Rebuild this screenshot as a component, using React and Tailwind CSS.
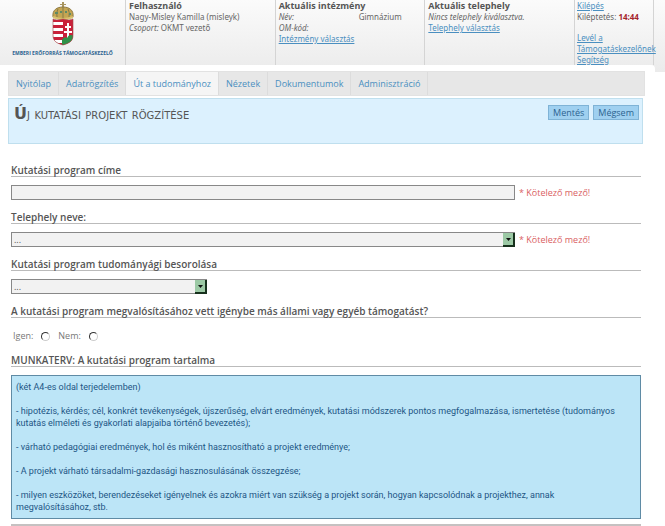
const tabs = ['Nyitólap', 'Adatrögzítés', 'Út a tudományhoz', 'Nézetek', 'Dokumentumok', 'Adminisztráció']
const activeTab = 'Út a tudományhoz'

const linkStyle = 'text-[#4a8fc0] underline'

function Crest() {
  return (
    <svg width="22" height="44" viewBox="0 0 22 44" aria-hidden="true">
      <defs>
        <clipPath id="shield">
          <path d="M1 17Q4 19 11 17Q18 19 21 17V33C21 39 18 41 11 43C4 41 1 39 1 33Z" />
        </clipPath>
      </defs>
      <path d="M10 0h2v2h2v1h-2v3h-2V3H8V2h2z" fill="#a89560" />
      <path d="M1 15C0 8 5 5 11 5S22 8 21 15Q11 19 1 15Z" fill="#c4a552" stroke="#8d7840" />
      <path d="M11 5v11M6 7q-2 3-1 8M16 7q2 3 1 8" stroke="#857a48" fill="none" />
      <path d="M3 11h3M8 10h2M13 10h2M17 12h2" stroke="#5f8a65" strokeWidth="2" />
      <path d="M1 15q10 4 20 0" stroke="#d9c36f" strokeWidth="2" fill="none" />
      <g clipPath="url(#shield)">
        <rect y="16" width="22" height="28" fill="#c9213a" />
        <path d="M0 20h11v3H0zM0 26h11v3H0zM0 32h11v3H0zM0 38h11v3H0z" fill="#fff" />
        <path d="M15 21h2v3h2v2h-2v3h3v2h-3v6h-2v-6h-3v-2h3v-3h-2v-2h2z" fill="#fff" />
        <path d="M10 44v-6q2-4 5-2q2-5 7-2v10z" fill="#2f9148" />
      </g>
      <path d="M1 17Q4 19 11 17Q18 19 21 17V33C21 39 18 41 11 43C4 41 1 39 1 33Z" fill="none" stroke="#a04a4a" strokeWidth="0.6" />
    </svg>
  )
}

function HeaderColumn({ title, children }) {
  return (
    <div className="border-l border-[#d4d4d4] pl-[3px]">
      <h2 className="font-['Open_Sans',sans-serif] text-[9px] leading-[11px] font-bold text-[#555]">{title}</h2>
      {children}
    </div>
  )
}

function FieldLabel({ htmlFor, children }) {
  return (
    <label htmlFor={htmlFor} className="block border-b border-[#bbb] text-[10px] leading-[12px] font-semibold text-[#555]">
      {children}
    </label>
  )
}

function Select({ id, className }) {
  return (
    <div className={`relative ${className}`}>
      <select
        id={id}
        className="block h-[15px] w-full appearance-none rounded-none border border-[#888] bg-[#f2f2f2] pl-[2px] text-[9px] leading-[13px] text-[#555] outline-none"
      >
        <option>...</option>
      </select>
      <span className="pointer-events-none absolute top-px right-0 flex h-[14px] w-[12px] items-center justify-center border-r-2 border-b-2 border-[#16301c] bg-[#9cc9a5]">
        <svg width="5" height="3" viewBox="0 0 5 3" aria-hidden="true">
          <path d="M0 0h5L2.500 3z" fill="#111" />
        </svg>
      </span>
    </div>
  )
}

function Required() {
  return <span className="text-[#d9605f]">* Kötelező mező!</span>
}

function Radio({ id, label }) {
  return (
    <>
      <label htmlFor={id}>{label}</label>
      <input
        id={id}
        type="radio"
        name="tamogatas"
        className="mx-[8px] size-[9px] appearance-none rounded-full border border-t-[#333] border-r-[#ccc] border-b-[#ccc] border-l-[#333] bg-white checked:bg-[#333]"
      />
    </>
  )
}

export default function App() {
  return (
    <div className="bg-white font-['Open_Sans',sans-serif] text-[9px] leading-[12px] text-[#666]">
      <header className="bg-linear-to-b from-[#fbfbfb] to-[#ebebeb] pb-[7px]">
        <div className="mr-[11px] grid h-[65px] grid-cols-[125px_1fr_1fr_1fr_79px] border-r border-[#d4d4d4] font-['Noto_Sans',sans-serif] text-[8px] leading-[11px]">
          <div className="flex flex-col items-center pt-[2px]">
            <Crest />
            <p className="mt-[2px] font-['Open_Sans',sans-serif] text-[5px] leading-[11px] font-bold whitespace-nowrap text-[#2d6390]">
              EMBERI ERŐFORRÁS TÁMOGATÁSKEZELŐ
            </p>
          </div>
          <HeaderColumn title="Felhasználó">
            <p>Nagy-Misley Kamilla (misleyk)</p>
            <p><i>Csoport:</i> OKMT vezető</p>
          </HeaderColumn>
          <HeaderColumn title="Aktuális intézmény">
            <p className="flex"><i className="w-[80px]">Név:</i> Gimnázium</p>
            <p><i>OM-kód:</i></p>
            <a href="#" className={linkStyle}>Intézmény választás</a>
          </HeaderColumn>
          <HeaderColumn title="Aktuális telephely">
            <p><i>Nincs telephely kiválasztva.</i></p>
            <a href="#" className={linkStyle}>Telephely választás</a>
          </HeaderColumn>
          <div className="border-l border-[#d4d4d4] pl-[2px]">
            <a href="#" className={linkStyle}>Kilépés</a>
            <p className="mb-[10px]">Kiléptetés: <b className="text-[#a3232b]">14:44</b></p>
            <a href="#" className={linkStyle}>Levél a Támogatáskezelőnek</a>
            <br />
            <a href="#" className={linkStyle}>Segítség</a>
          </div>
        </div>
      </header>

      <main className="-mt-[7px] mr-[10px] rounded-tr-[4px] bg-white pt-[6px] pr-[10px] pl-[8px]">
        <nav className="flex h-[25px] border border-[#e2e2e2] bg-[#e7e7e7]">
          {tabs.map(tab => (
            <a
              key={tab}
              href="#"
              className={`flex items-center border-r border-[#dcdcdc] px-[7px] text-[#4a8fc0] ${tab === activeTab ? 'bg-[#f5f5f5]' : ''}`}
            >
              {tab}
            </a>
          ))}
        </nav>

        <section className="mt-[2px] mr-[2px] flex h-[46px] items-start justify-between border border-[#bfdfee] bg-[#dcf1fe] pt-[6px] pr-[3px] pl-[5px]">
          <h1 className="font-['DejaVu_Sans',sans-serif] text-[14px] leading-[18px] [font-variant:small-caps] text-[#555] first-letter:text-[16px] first-letter:font-bold">
            Új kutatási projekt rögzítése
          </h1>
          <div className="flex gap-[4px] text-[#2d6390]">
            <button type="button" className="h-[15px] border border-[#7fb3d6] bg-[#9fd0f0] px-[4px] leading-[13px]">Mentés</button>
            <button type="button" className="h-[15px] border border-[#7fb3d6] bg-[#9fd0f0] px-[4px] leading-[13px]">Mégsem</button>
          </div>
        </section>

        <form className="mt-[20px] mr-[4px] ml-[3px]">
          <FieldLabel htmlFor="cim">Kutatási program címe</FieldLabel>
          <div className="mt-[8px] mb-[11px] flex items-center gap-[4px]">
            <input id="cim" type="text" className="h-[15px] w-4/5 border border-[#888] bg-[#f2f2f2] px-[2px] outline-none" />
            <Required />
          </div>

          <FieldLabel htmlFor="telephely">Telephely neve:</FieldLabel>
          <div className="mt-[8px] mb-[11px] flex items-center gap-[4px]">
            <Select id="telephely" className="w-4/5" />
            <Required />
          </div>

          <FieldLabel htmlFor="besorolas">Kutatási program tudományági besorolása</FieldLabel>
          <Select id="besorolas" className="mt-[8px] mb-[11px] w-[196px]" />

          <fieldset>
            <legend className="block w-full border-b border-[#bbb] text-[10px] leading-[12px] font-semibold text-[#555]">
              A kutatási program megvalósításához vett igénybe más állami vagy egyéb támogatást?
            </legend>
            <div className="flex items-center py-[12px] pl-[2px] text-[#777]">
              <Radio id="igen" label="Igen:" />
              <Radio id="nem" label="Nem:" />
            </div>
          </fieldset>

          <h2 className="border-b border-[#bbb] text-[10px] leading-[12px] font-semibold text-[#555]">
            MUNKATERV: A kutatási program tartalma
          </h2>
          <div className="mt-[8px] space-y-[12px] border border-[#5f8ba5] bg-[#bce5f7] px-[4px] py-[5px] font-['Roboto',sans-serif] text-[#1d5585]">
            <p>(két A4-es oldal terjedelemben)</p>
            <p>
              - hipotézis, kérdés; cél, konkrét tevékenységek, újszerűség, elvárt eredmények, kutatási módszerek pontos
              megfogalmazása, ismertetése (tudományos kutatás elméleti és gyakorlati alapjaiba történő bevezetés);
            </p>
            <p>- várható pedagógiai eredmények, hol és miként hasznosítható a projekt eredménye;</p>
            <p>- A projekt várható társadalmi-gazdasági hasznosulásának összegzése;</p>
            <p>
              - milyen eszközöket, berendezéseket igényelnek és azokra miért van szükség a projekt során, hogyan
              kapcsolódnak a projekthez, annak<br />megvalósításához, stb.
            </p>
          </div>
          <div className="mt-[5px] border-t-2 border-[#c5c1c1]" />
        </form>
      </main>
    </div>
  )
}
